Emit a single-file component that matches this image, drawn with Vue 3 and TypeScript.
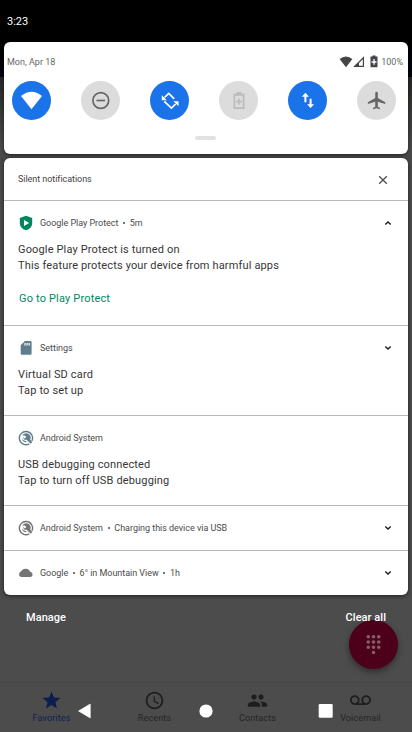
<script setup lang="ts">
interface Tile { name: string; state: 'on' | 'off' | 'disabled' }
interface Notice {
  icon: string
  color: string
  app: string
  meta: string[]
  title?: string
  body?: string
  action?: string
  arrow?: 'up' | 'down'
  size: string
}
const tiles: Tile[] = [
  { name: 'wifi', state: 'on' },
  { name: 'dnd', state: 'off' },
  { name: 'rotate', state: 'on' },
  { name: 'battery', state: 'disabled' },
  { name: 'data', state: 'on' },
  { name: 'plane', state: 'off' },
]
const notices: Notice[] = [
  { icon: 'shield', color: '#01875f', app: 'Google Play Protect', meta: ['5m'], title: 'Google Play Protect is turned on', body: 'This feature protects your device from harmful apps', action: 'Go to Play Protect', arrow: 'up', size: 'tall' },
  { icon: 'sd', color: '#607d8b', app: 'Settings', meta: [], title: 'Virtual SD card', body: 'Tap to set up', arrow: 'down', size: 'medium' },
  { icon: 'system', color: '#607d8b', app: 'Android System', meta: [], title: 'USB debugging connected', body: 'Tap to turn off USB debugging', size: 'medium' },
  { icon: 'system', color: '#757575', app: 'Android System', meta: ['Charging this device via USB'], arrow: 'down', size: 'small' },
  { icon: 'cloud', color: '#757575', app: 'Google', meta: ['6° in Mountain View', '1h'], arrow: 'down', size: 'last' },
]
const tabs = ['Favorites', 'Recents', 'Contacts', 'Voicemail']
</script>

<template>
  <div class="screen">
    <div class="dialer">
      <div class="search-area"></div>
      <div class="content"></div>
      <div class="tabs">
        <div v-for="t in tabs" :key="t" class="tab" :class="{ active: t === 'Favorites' }">
          <svg viewBox="0 0 24 24" class="tab-icon">
            <path v-if="t === 'Favorites'" d="M12 17.27L18.18 21l-1.64-7.03L22 9.24l-7.19-.61L12 2 9.19 8.63 2 9.24l5.46 4.73L5.82 21z" />
            <path v-else-if="t === 'Recents'" d="M11.99 2C6.47 2 2 6.48 2 12s4.47 10 9.99 10C17.52 22 22 17.52 22 12S17.52 2 11.99 2zM12 20c-4.42 0-8-3.58-8-8s3.58-8 8-8 8 3.58 8 8-3.58 8-8 8zm.5-13H11v6l5.25 3.15.75-1.23-4.5-2.67z" />
            <path v-else-if="t === 'Contacts'" d="M16 11c1.66 0 2.99-1.34 2.99-3S17.66 5 16 5s-3 1.34-3 3 1.34 3 3 3zm-8 0c1.66 0 2.99-1.34 2.99-3S9.66 5 8 5 5 6.34 5 8s1.34 3 3 3zm0 2c-2.33 0-7 1.17-7 3.5V19h14v-2.5c0-2.33-4.67-3.5-7-3.5zm8 0c-.29 0-.62.02-.97.05 1.16.84 1.97 1.97 1.97 3.45V19h6v-2.5c0-2.33-4.67-3.5-7-3.5z" />
            <path v-else d="M18.5 6C15.46 6 13 8.46 13 11.5c0 1.33.47 2.55 1.26 3.5H9.74c.79-.95 1.26-2.17 1.26-3.5C11 8.46 8.54 6 5.5 6S0 8.46 0 11.5 2.46 17 5.5 17h13c3.04 0 5.5-2.46 5.5-5.5S21.54 6 18.5 6zm-13 9C3.57 15 2 13.43 2 11.5S3.57 8 5.5 8 9 9.57 9 11.5 7.43 15 5.5 15zm13 0c-1.93 0-3.5-1.57-3.5-3.5S16.57 8 18.5 8 22 9.57 22 11.5 20.43 15 18.5 15z" />
          </svg>
          <span>{{ t }}</span>
        </div>
      </div>
      <div class="fab">
        <svg viewBox="0 0 24 24">
          <path d="M12 19c-1.1 0-2 .9-2 2s.9 2 2 2 2-.9 2-2-.9-2-2-2zM6 1c-1.1 0-2 .9-2 2s.9 2 2 2 2-.9 2-2-.9-2-2-2zm0 6c-1.1 0-2 .9-2 2s.9 2 2 2 2-.9 2-2-.9-2-2-2zm0 6c-1.1 0-2 .9-2 2s.9 2 2 2 2-.9 2-2-.9-2-2-2zm12-8c1.1 0 2-.9 2-2s-.9-2-2-2-2 .9-2 2 .9 2 2 2zm-6 8c-1.1 0-2 .9-2 2s.9 2 2 2 2-.9 2-2-.9-2-2-2zm6 0c-1.1 0-2 .9-2 2s.9 2 2 2 2-.9 2-2-.9-2-2-2zm0-6c-1.1 0-2 .9-2 2s.9 2 2 2 2-.9 2-2-.9-2-2-2zm-6 0c-1.1 0-2 .9-2 2s.9 2 2 2 2-.9 2-2-.9-2-2-2zm0-6c-1.1 0-2 .9-2 2s.9 2 2 2 2-.9 2-2-.9-2-2-2z" />
        </svg>
      </div>
    </div>

    <div class="shade">
      <div class="status"><span>3:23</span></div>
      <section class="quick">
        <div class="quick-head">
          <span class="date">Mon, Apr 18</span>
          <svg class="status-icons" viewBox="0 0 42 14">
            <path d="M7 12.2L.6 4Q7-1.2 13.4 4Z" />
            <path fill-rule="evenodd" d="M14.2 12L25 1.2V12ZM20 10.8H23.8V4.3L20 8Z" />
            <path fill-rule="evenodd" d="M31.5 1.5h2V.5h3v1h2v10.7h-7zM34.4 4v2.2h-1.8v1.5h1.8v2h1.3v-2h1.8V6.2h-1.8V4z" />
          </svg>
          <span class="percent">100%</span>
        </div>
        <div class="tiles">
          <div v-for="t in tiles" :key="t.name" class="tile" :class="t.state">
            <svg viewBox="0 0 39 39">
              <path v-if="t.name === 'wifi'" d="M19.5 28.3L9 15Q19.5 6.4 30 15Z" />
              <g v-else-if="t.name === 'dnd'" class="line">
                <circle cx="19.8" cy="19.5" r="7.9" /><path d="M15.5 19.5h8.6" />
              </g>
              <g v-else-if="t.name === 'rotate'">
                <path class="line" d="M14.5 16.5L18.7 12.4L24.2 17.9M14.3 20.3L21.4 27.2L25.6 23" />
                <path d="M11.8 14.2V19.200H16.800ZM28.500 25.300V20.200H23.400Z" />
              </g>
              <g v-else-if="t.name === 'battery'">
                <path fill-rule="evenodd" d="M17.500 11h5v1.800h3V28h-11V12.800h3zM16.200 14.700v11.600h7.600V14.700z" />
                <path d="M19.200 17.500h1.600v2.300H23v1.700h-2.200v2.300h-1.600v-2.300H17v-1.700h2.200z" />
              </g>
              <path v-else-if="t.name === 'data'" d="M13.800 15.700L17.400 11.800L21 15.700H18.400V21.200H16.400V15.700ZM19 23.200H21.600V17.800H23.600V23.200H26.200L22.600 27.100Z" />
              <g v-else transform="translate(9.1 9.1) scale(.87)">
                <path d="M22 16v-2l-8.500-5V3.500c0-.83-.67-1.500-1.500-1.500s-1.500.67-1.500 1.500V9L2 14v2l8.500-2.500V19L8 20.500V22l4-1 4 1v-1.500L13.500 19v-5.500L22 16z" />
              </g>
            </svg>
          </div>
        </div>
        <div class="handle"></div>
      </section>

      <section class="list">
        <header class="list-head">
          <span>Silent notifications</span>
          <svg viewBox="0 0 10 10"><path d="M1.200 1.200L8.800 8.800M8.800 1.200L1.200 8.800" /></svg>
        </header>
        <article v-for="(n, i) in notices" :key="i" class="notice" :class="n.size">
          <div class="row">
            <svg class="app-icon" viewBox="0 0 16 16" :style="{ color: n.color }">
              <template v-if="n.icon === 'shield'">
                <path d="M8 .8L14.200 3V8C14.200 11.800 11.500 14.200 8 15.300C4.500 14.200 1.800 11.800 1.800 8V3Z" />
                <path fill="#fff" d="M6 4.900L11.200 8L6 11.100Z" />
              </template>
              <path v-else-if="n.icon === 'sd'" fill-rule="evenodd" d="M7 1H12.300Q13.600 1 13.600 2.300V13.500Q13.600 14.800 12.300 14.800H4Q2.700 14.800 2.700 13.500V5.300ZM6.400 3v2.500h1.200V3zM8.500 3v2.500h1.200V3zM10.600 3v2.500h1.200V3z" />
              <template v-else-if="n.icon === 'system'">
                <path class="ring" d="M11.300 13.800A6.600 6.600 0 1 1 13.900 11" />
                <path d="M4.300 5.600A4.400 4.400 0 0 1 12.200 9.600L14.200 12.300L12.700 13.800L8.600 9.700Q7 10.200 5.900 9.200Q5.100 8.200 5.300 7.100L6.900 8.400L8.300 7.100L6.800 5.500Q5.500 5.300 4.300 5.600Z" />
                <path d="M3.700 8.200Q4.200 11.700 7.500 12.300L8.900 12.100L7.800 11Q5 11.200 3.700 8.200Z" />
              </template>
              <path v-else d="M3.500 12A3 3 0 0 1 3.400 6.500A4.700 4.700 0 0 1 12.100 6.900A2.700 2.700 0 0 1 12.900 12Z" transform="translate(-.7 -.1) scale(1.060 1)" />
            </svg>
            <span class="app">{{ n.app }}</span>
            <template v-for="m in n.meta" :key="m"><i class="dot"></i><span class="app">{{ m }}</span></template>
            <svg v-if="n.arrow" class="arrow" :class="n.arrow" viewBox="0 0 8 6"><path d="M1.300 1.600L4 4.100L6.700 1.600" /></svg>
          </div>
          <div v-if="n.title" class="copy">
            <p>{{ n.title }}</p>
            <p>{{ n.body }}</p>
          </div>
          <div v-if="n.action" class="action">{{ n.action }}</div>
        </article>
      </section>
      <footer class="footer"><span>Manage</span><span>Clear all</span></footer>
    </div>

    <div class="nav">
      <svg viewBox="0 0 16 16"><path d="M1 8L12.700 1Q13.600 .5 13.600 1.600V14.300Q13.600 15.500 12.700 15Z" /></svg>
      <svg viewBox="0 0 16 16"><circle cx="8" cy="8" r="6.600" /></svg>
      <svg viewBox="0 0 16 16"><rect x=".7" y="1" width="14" height="13.700" rx="1.200" /></svg>
    </div>
  </div>
</template>

<style>
body { margin: 0; background: #4c4c4c; }
</style>
<style scoped>
.screen { position: relative; width: 412px; height: 732px; overflow: hidden; font-family: Roboto, sans-serif; background: #4c4c4c; }
.dialer { position: absolute; inset: 0; display: flex; flex-direction: column; }
.search-area { height: 77px; background: linear-gradient(#000 42px, #02050f); }
.content { flex: 1; background: linear-gradient(#272625, #484848 70px, #4c4c4c 110px); }
.tabs { height: 49px; border-top: 1px solid #454545; display: flex; }
.tab { width: 103px; display: flex; flex-direction: column; align-items: center; padding-top: 7px; box-sizing: border-box; font-size: 9px; line-height: 12px; letter-spacing: .13px; color: #242628; }
.tab-icon { width: 21px; height: 21px; fill: #1d1e20; margin-bottom: 1px; }
.tab.active { color: #0f2150; }
.tab.active .tab-icon { fill: #0c1d4f; }
.fab { position: absolute; left: 349px; top: 620px; width: 49px; height: 49px; border-radius: 50%; background: #4d0019; display: flex; align-items: center; justify-content: center; box-shadow: 0 3px 6px #0006; }
.fab svg { width: 21px; height: 21px; fill: #85606c; }
.shade { position: relative; padding: 0 4px; }
.status { height: 42px; display: flex; align-items: center; padding-left: 3px; color: #fff; font-size: 11px; letter-spacing: 0; }
.quick { height: 112px; background: #fff; border-radius: 6px; box-sizing: border-box; padding-top: 13px; box-shadow: 0 1px 3px #0008; }
.quick-head { height: 14px; display: flex; align-items: center; padding: 0 5px 0 3px; font-size: 9px; color: #666; }
.date { letter-spacing: 0; flex: 1; }
.status-icons { width: 42px; height: 14px; fill: #454545; }
.percent { letter-spacing: 0; }
.tiles { margin: 12px 0 0 8px; display: flex; gap: 30px; }
.tile { width: 39px; height: 39px; border-radius: 50%; background: #dcdcdc; color: #666; flex: none; }
.tile.on { background: #1a73e8; color: #fff; }
.tile.disabled { color: #bcbcbc; }
.tile svg { display: block; width: 39px; height: 39px; fill: currentColor; }
.tile .line { fill: none; stroke: currentColor; stroke-width: 1.700; stroke-linejoin: round; }
.handle { width: 21px; height: 4px; margin: 16px 0 0 191px; border-radius: 2px; background: #e2e2e2; }
.list { margin-top: 4px; height: 437px; background: #fff; border-radius: 6px; overflow: hidden; box-shadow: 0 1px 4px #0009; }
.list-head { height: 42px; display: flex; align-items: center; justify-content: space-between; padding: 0 20px 0 14px; font-size: 9px; letter-spacing: -.05px; color: #444; }
.list-head svg { width: 10px; height: 10px; margin-top: 1px; fill: none; stroke: #4a4d50; stroke-width: 1.300; }
.notice { border-top: 1px solid #b9babc; box-sizing: border-box; padding: 14px 16px 0 14px; }
.tall { height: 125px; }
.medium { height: 90px; }
.small, .last { height: 45px; }
.row { height: 16px; display: flex; align-items: center; }
.app-icon { width: 16px; height: 16px; fill: currentColor; margin-right: 6px; }
.ring { fill: none; stroke: currentColor; stroke-width: 1.400; }
.app { font-size: 9px; letter-spacing: -.03px; color: #4b4b4b; white-space: nowrap; }
.dot { width: 2px; height: 2px; border-radius: 50%; background: #444; margin: 0 4.700px; }
.arrow { width: 8px; height: 6px; margin-left: auto; fill: none; stroke: #1c1c1c; stroke-width: 1.400; }
.arrow.up { transform: rotate(180deg); }
.copy { margin-top: 11px; font-size: 11px; line-height: 16px; letter-spacing: .15px; color: #363636; }
.copy p { margin: 0; }
.action { margin: 17px 0 0 1px; font-size: 11px; line-height: 16px; letter-spacing: .17px; color: #01875f; }
.footer { display: flex; justify-content: space-between; padding: 15px 22px 0 22px; font-size: 11px; line-height: 16px; letter-spacing: .05px; color: #fff; font-weight: 500; }
.nav { position: absolute; left: 77px; right: 78px; bottom: 13px; display: flex; justify-content: space-between; height: 16px; }
.nav svg { width: 16px; height: 16px; fill: #fff; }
</style>
